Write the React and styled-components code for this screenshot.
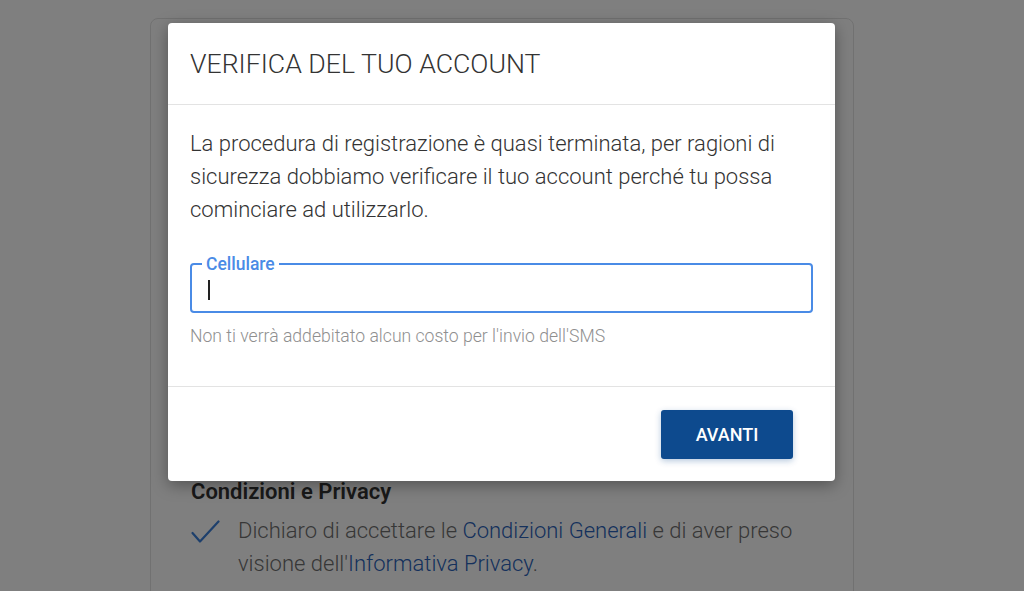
import React from "react";
import styled, { createGlobalStyle } from "styled-components";

const GlobalStyle = createGlobalStyle`
  body {
    margin: 0;
    background: #ffffff;
    font-family: Roboto, "Liberation Sans", sans-serif;
  }
`;

const Page = styled.div`
  position: relative;
  height: 591px;
  overflow: hidden;
  padding-top: 18px;
  box-sizing: border-box;
`;

const Card = styled.div`
  margin-left: 150px;
  width: 704px;
  height: 620px;
  box-sizing: border-box;
  border: 1px solid #e2e2e2;
  border-radius: 8px;
  padding: 458px 40px 0;
`;

const SectionTitle = styled.h3`
  margin: 0 0 7px;
  font-size: 22px;
  line-height: 30px;
  font-weight: 600;
  color: #333;
`;

const CheckRow = styled.div`
  display: flex;
  align-items: flex-start;
  gap: 18px;
`;

const CheckText = styled.p`
  margin: 0;
  font-size: 22px;
  line-height: 33px;
  font-weight: 300;
  color: #6e6e6e;

  a {
    color: #2a62b8;
    text-decoration: none;
  }
`;

const Overlay = styled.div`
  position: absolute;
  inset: 0;
  background: rgba(0, 0, 0, 0.5);
`;

const Modal = styled.div`
  position: absolute;
  left: 168px;
  top: 23px;
  width: 667px;
  background: #fff;
  border-radius: 4px;
  box-shadow: 0 4px 16px rgba(0, 0, 0, 0.35);
`;

const Header = styled.div`
  height: 82px;
  box-sizing: border-box;
  padding: 0 22px;
  display: flex;
  align-items: center;
  border-bottom: 1px solid #e3e3e3;
`;

const Title = styled.h2`
  margin: 0;
  font-size: 26.7px;
  font-weight: 300;
  color: #333;
`;

const Body = styled.div`
  padding: 22px 22px 0;
  height: 282px;
  box-sizing: border-box;
  border-bottom: 1px solid #e3e3e3;
`;

const Intro = styled.p`
  margin: 0;
  font-size: 22px;
  line-height: 33px;
  font-weight: 300;
  color: #333;
`;

const Field = styled.fieldset`
  margin: 32px 0 0;
  padding: 0 14px;
  height: 55px;
  box-sizing: border-box;
  border: 2px solid #4a8be6;
  border-radius: 4px;
  position: relative;

  legend {
    padding: 0 4px;
    margin-left: -4px;
    font-size: 17.5px;
    font-weight: 500;
    color: #4a8be6;
    line-height: 12px;
  }
`;

const Input = styled.input`
  display: block;
  width: 100%;
  border: none;
  outline: none;
  font-size: 20px;
  font-family: inherit;
  padding: 6px 0 0;
  background: transparent;
`;

const Cursor = styled.span`
  position: absolute;
  left: 16px;
  top: 10px;
  width: 1.5px;
  height: 20px;
  background: #222;
`;

const Hint = styled.p`
  margin: 13px 0 0;
  font-size: 17.6px;
  line-height: 20px;
  font-weight: 300;
  color: #8f8f8f;
`;

const Footer = styled.div`
  height: 94px;
  box-sizing: border-box;
  padding: 0 42px 0 22px;
  display: flex;
  align-items: center;
  justify-content: flex-end;
`;

const Button = styled.button`
  width: 132px;
  height: 49px;
  border: none;
  border-radius: 3px;
  background: #0d4a8e;
  color: #fff;
  font-family: inherit;
  font-size: 18px;
  font-weight: 500;
  box-shadow: 0 2px 6px rgba(13, 74, 142, 0.3);
  margin-top: 1px;
`;

const Check = () => (
  <svg width="29" height="24" viewBox="0 0 29 24" style={{ flexShrink: 0, marginTop: 6 }}>
    <path d="M1.5 13 L9 21.5 L27.5 1.5" fill="none" stroke="#3a7fd8" strokeWidth="2.2" strokeLinecap="round" strokeLinejoin="round" />
  </svg>
);

export default function App() {
  return (
    <Page>
      <GlobalStyle />
      <Card>
        <SectionTitle>Condizioni e Privacy</SectionTitle>
        <CheckRow>
          <Check />
          <CheckText>
            Dichiaro di accettare le <a href="#">Condizioni Generali</a> e di aver preso
            visione dell'<a href="#">Informativa Privacy</a>.
          </CheckText>
        </CheckRow>
      </Card>
      <Overlay />
      <Modal>
        <Header>
          <Title>VERIFICA DEL TUO ACCOUNT</Title>
        </Header>
        <Body>
          <Intro>
            La procedura di registrazione è quasi terminata, per ragioni di sicurezza dobbiamo
            verificare il tuo account perché tu possa cominciare ad utilizzarlo.
          </Intro>
          <Field>
            <legend>Cellulare</legend>
            <Input type="tel" />
            <Cursor />
          </Field>
          <Hint>Non ti verrà addebitato alcun costo per l'invio dell'SMS</Hint>
        </Body>
        <Footer>
          <Button>AVANTI</Button>
        </Footer>
      </Modal>
    </Page>
  );
}
